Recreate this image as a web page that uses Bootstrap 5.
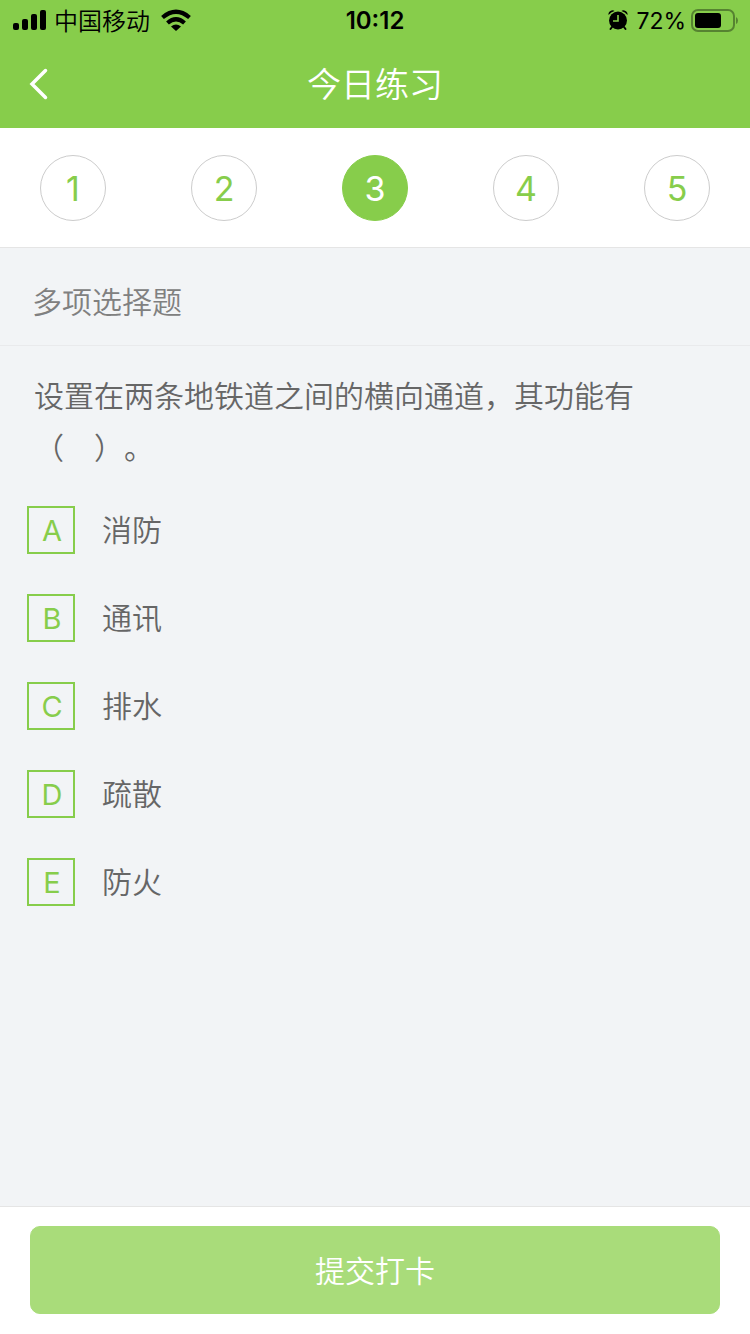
<!DOCTYPE html>
<html lang="zh-CN">
<head>
<meta charset="utf-8">
<meta name="viewport" content="width=device-width, initial-scale=1">
<title>今日练习</title>
<link href="https://cdn.jsdelivr.net/npm/bootstrap@5.3.0/dist/css/bootstrap.min.css" rel="stylesheet">
<style>
  :root { --leaf: #87cd4b; --paper: #f2f4f6; }
  body {
    font-family: Inter, "Noto Sans CJK SC", sans-serif;
    font-size: 30px;
    line-height: 48px;
    font-weight: 350;
    color: #666;
    background: var(--paper);
  }
  .app-header { background: var(--leaf); }
  .status-bar { height: 40px; padding: 0 12px; font-size: 24px; line-height: 40px; color: #000; }
  .status-bar span { padding-top: 2px; }
  .status-time { font-weight: 600; }
  .status-bar .status-power { padding-top: 0; font-size: 23px; font-weight: 400; }
  .title-bar { height: 88px; }
  .page-title { padding-top: 2px; font-size: 34px; font-weight: inherit; line-height: 48px; }
  .back-link { width: 80px; height: 88px; padding-left: 28px; }
  .steps { padding: 27px 40px 26px; border-bottom: 1px solid #e5e5e5; }
  .step-btn {
    width: 66px; height: 66px; font-size: 34px; font-weight: 400;
    --bs-btn-color: var(--leaf); --bs-btn-border-color: #ccc;
    --bs-btn-hover-color: var(--leaf); --bs-btn-hover-border-color: var(--leaf);
    --bs-btn-active-color: #fff; --bs-btn-active-bg: var(--leaf); --bs-btn-active-border-color: var(--leaf);
  }
  .kind-title { padding: 30px 32px 19px; font-size: 30px; line-height: 48px; font-weight: inherit; color: #808080; border-bottom: 1px solid #e9eaec; }
  .question-text { padding: 24px 34px; line-height: 52px; text-spacing-trim: space-all; }
  .answers { padding: 8px 27px; gap: 40px; }
  .answer { gap: 27px; cursor: pointer; }
  .answer-key { width: 48px; height: 48px; padding: 2px 0 0 2px; border: 2px solid var(--leaf); color: var(--leaf); font-size: 29px; font-weight: 400; }
  .btn-check:checked + .answer .answer-key { background: var(--leaf); color: #fff; }
  .submit-bar { padding: 19px 30px 20px; border-top: 1px solid #e5e5e5; }
  .submit-btn {
    height: 88px; padding: 8px 0 6px; font-size: 30px; font-weight: inherit; border-radius: 10px;
    --bs-btn-color: #fff; --bs-btn-bg: #a9dc7a; --bs-btn-border-color: #a9dc7a;
    --bs-btn-hover-color: #fff; --bs-btn-hover-bg: var(--leaf); --bs-btn-hover-border-color: var(--leaf);
  }
</style>
</head>
<body class="d-flex flex-column min-vh-100">
<header class="app-header">
  <div class="status-bar row g-0 align-items-center">
    <div class="col d-flex align-items-center">
      <svg class="me-2" width="34" height="22" viewBox="0 0 34 22" aria-hidden="true">
        <rect x="1" y="13" width="6" height="7" rx="2"/><rect x="10" y="9" width="6" height="11" rx="2"/>
        <rect x="19" y="4" width="6" height="16" rx="2"/><rect x="28" y="0" width="6" height="20" rx="2"/>
      </svg>
      <span>中国移动</span>
      <svg class="ms-2" width="36" height="24" viewBox="0 0 36 24" aria-hidden="true">
        <g fill="none" stroke="#000" stroke-width="4.200"><path d="M4.500 8.500Q18 -3 31.500 8.500"/><path d="M9.500 14Q18 6.500 26.500 14"/></g>
        <path d="M13 17.500Q18 13.500 23 17.500L18 22Z"/>
      </svg>
    </div>
    <div class="col-auto status-time">10:12</div>
    <div class="col d-flex align-items-center justify-content-end">
      <svg class="me-2" width="20" height="22" viewBox="0 0 20 22" aria-hidden="true">
        <circle cx="10" cy="10.500" r="9"/>
        <path d="M0.500 5Q0 1.500 3.500 0.500Q5.500 0 6.500 1Q3 2 0.500 5ZM19.500 5Q20 1.500 16.500 0.500Q14.500 0 13.500 1Q17 2 19.500 5Z"/>
        <path d="M4 17L2.500 19M16 17L17.500 19" stroke="#000" stroke-width="2" stroke-linecap="round"/>
        <path d="M10 5V11H5" fill="none" stroke="#87cd4b" stroke-width="1.600"/>
      </svg>
      <span class="status-power me-1">72%</span>
      <svg width="48" height="24" viewBox="0 0 48 24" aria-hidden="true">
        <rect x="2" y="1" width="42" height="21" rx="6" fill="none" stroke="#568331" stroke-width="2"/>
        <rect x="5" y="4" width="26" height="15" rx="3"/>
        <path d="M46 8Q48 9 48 11.500Q48 14 46 15Z" fill="#568331"/>
      </svg>
    </div>
  </div>
  <nav class="title-bar d-flex align-items-center text-white">
    <a class="back-link d-flex align-items-center" href="#" aria-label="返回">
      <svg width="22" height="32" viewBox="0 0 22 32" aria-hidden="true"><path d="M17.500 2.500L4 16L17.500 29.500" fill="none" stroke="#fff" stroke-width="3.500" stroke-linecap="round"/></svg>
    </a>
    <h1 class="page-title flex-grow-1 text-center m-0">今日练习</h1>
    <div class="back-link"></div>
  </nav>
</header>

<nav class="steps d-flex justify-content-between bg-white" aria-label="题目">
  <button type="button" class="btn step-btn rounded-circle p-0">1</button>
  <button type="button" class="btn step-btn rounded-circle p-0">2</button>
  <button type="button" class="btn step-btn rounded-circle p-0 active" aria-current="step">3</button>
  <button type="button" class="btn step-btn rounded-circle p-0">4</button>
  <button type="button" class="btn step-btn rounded-circle p-0">5</button>
</nav>

<main class="flex-grow-1">
  <h2 class="kind-title m-0">多项选择题</h2>
  <p class="question-text m-0">设置在两条地铁道之间的横向通道，其功能有（　）。</p>
  <div class="answers d-flex flex-column align-items-start" role="group" aria-label="选项">
    <div><input class="btn-check" type="checkbox" id="optA"><label class="answer d-flex align-items-center" for="optA"><span class="answer-key d-flex align-items-center justify-content-center">A</span><span>消防</span></label></div>
    <div><input class="btn-check" type="checkbox" id="optB"><label class="answer d-flex align-items-center" for="optB"><span class="answer-key d-flex align-items-center justify-content-center">B</span><span>通讯</span></label></div>
    <div><input class="btn-check" type="checkbox" id="optC"><label class="answer d-flex align-items-center" for="optC"><span class="answer-key d-flex align-items-center justify-content-center">C</span><span>排水</span></label></div>
    <div><input class="btn-check" type="checkbox" id="optD"><label class="answer d-flex align-items-center" for="optD"><span class="answer-key d-flex align-items-center justify-content-center">D</span><span>疏散</span></label></div>
    <div><input class="btn-check" type="checkbox" id="optE"><label class="answer d-flex align-items-center" for="optE"><span class="answer-key d-flex align-items-center justify-content-center">E</span><span>防火</span></label></div>
  </div>
</main>

<footer class="submit-bar bg-white">
  <button type="button" class="btn submit-btn w-100">提交打卡</button>
</footer>
<script src="https://cdn.jsdelivr.net/npm/bootstrap@5.3.0/dist/js/bootstrap.bundle.min.js"></script>
</body>
</html>
